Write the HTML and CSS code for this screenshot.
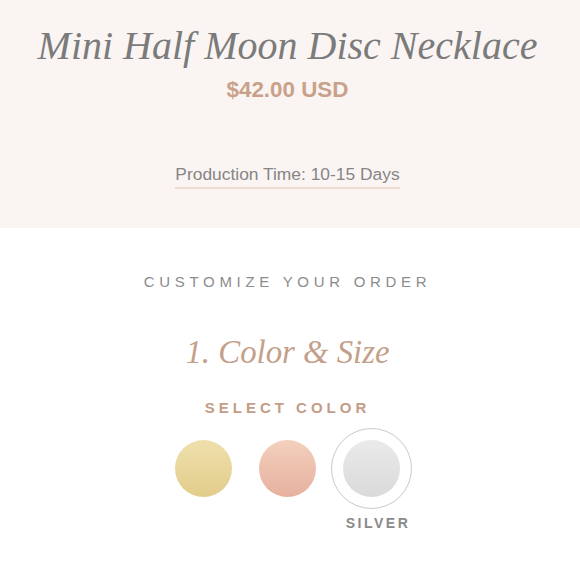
FILE: index.html
```
<!DOCTYPE html>
<html>
    <head>
        <title>Mini Half Moon Disc Necklace</title>
        <link rel="stylesheet" href="styles.css">
    </head>
    <body>
        <div class="product-head">
            <h1 class="product-title">Mini Half Moon Disc Necklace</h1>
            <div class="product-price">$42.00 USD</div>
            <div class="production">
                <span class="production-link">Production Time: 10-15 Days</span>
            </div>
        </div>
        <div class="customize">
            <h2 class="customize-title">CUSTOMIZE YOUR ORDER</h2>
            <h3 class="step-title">1. Color &amp; Size</h3>
            <div class="select-label">SELECT COLOR</div>
            <div class="swatches">
                <div class="swatch-item">
                    <div class="swatch-ring"><div class="swatch gold"></div></div>
                </div>
                <div class="swatch-item">
                    <div class="swatch-ring"><div class="swatch rose"></div></div>
                </div>
                <div class="swatch-item">
                    <div class="swatch-ring selected"><div class="swatch silver"></div></div>
                    <div class="swatch-name">SILVER</div>
                </div>
            </div>
        </div>
    </body>
</html>
```

FILE: styles.css
```
body {
  margin: 0;
  background: #fff;
  font-family: "Liberation Sans", Arial, sans-serif;
}

.product-head {
  background: #faf5f3;
  padding: 22px 5px 0 0;
  height: 206px;
  text-align: center;
}

.product-title {
  margin: 0;
  font-family: "Liberation Serif", "Times New Roman", serif;
  font-style: italic;
  font-weight: normal;
  font-size: 40px;
  line-height: 48px;
  color: #7b7b7b;
}

.product-price {
  margin-top: 7px;
  font-weight: bold;
  font-size: 22.4px;
  line-height: 26px;
  color: #c9a18a;
}

.production {
  margin-top: 61px;
}

.production-link {
  display: inline-block;
  font-size: 17.4px;
  line-height: 20px;
  color: #858585;
  padding-bottom: 3px;
  border-bottom: 2px solid #f0dbcf;
}

.customize {
  padding: 45px 5px 0 0;
  text-align: center;
}

.customize-title {
  margin: 0;
  font-weight: normal;
  font-size: 15px;
  line-height: 18px;
  letter-spacing: 4.7px;
  color: #8c8c8c;
}

.step-title {
  margin: 41px 0 0;
  font-family: "Liberation Serif", "Times New Roman", serif;
  font-style: italic;
  font-weight: normal;
  font-size: 32.8px;
  line-height: 40px;
  color: #c4a08a;
}

.select-label {
  margin-top: 27px;
  font-weight: bold;
  font-size: 15px;
  line-height: 18px;
  letter-spacing: 4px;
  color: #c49d86;
}

.swatches {
  margin-top: 11px;
  display: flex;
  justify-content: center;
  gap: 3px;
}

.swatch-item {
  width: 81px;
  display: flex;
  flex-direction: column;
  align-items: center;
}

.swatch-ring {
  width: 81px;
  height: 81px;
  box-sizing: border-box;
  border: 1.5px solid transparent;
  border-radius: 50%;
  display: flex;
  align-items: center;
  justify-content: center;
}

.swatch-ring.selected {
  border-color: #c9c9c9;
}

.swatch {
  width: 57px;
  height: 57px;
  border-radius: 50%;
}

.gold {
  background: linear-gradient(#efe0ac, #e2cc8b);
}

.rose {
  background: linear-gradient(#f3d0bd, #e6b19e);
}

.silver {
  background: linear-gradient(#eaeaea, #dadada);
}

.swatch-name {
  margin-top: 6px;
  padding-left: 13px;
  font-weight: bold;
  font-size: 14px;
  line-height: 16px;
  letter-spacing: 2.5px;
  color: #8a8a8a;
  white-space: nowrap;
}
```
